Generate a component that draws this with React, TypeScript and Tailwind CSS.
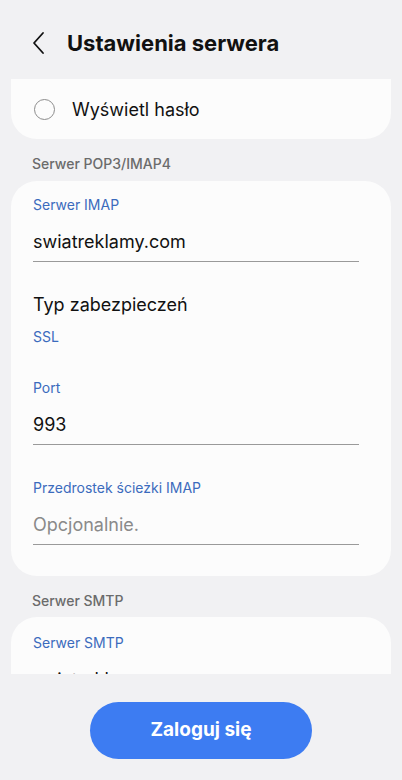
import React from "react";

const font = { fontFamily: "Inter, 'Noto Sans', sans-serif" };

function Field({
  label,
  value,
  placeholder = false,
  top,
}: {
  label: string;
  value: string;
  placeholder?: boolean;
  top: string;
}) {
  return (
    <div className={`${top} flex flex-col`}>
      <p className="h-5 text-[14px] leading-5 text-[#3b6bbd]">{label}</p>
      <p
        className={`mt-[13px] h-7 text-[18px] leading-7 ${
          placeholder ? "text-[#8a8a8a]" : "text-[#111]"
        }`}
      >
        {value}
      </p>
      <div className="mt-[5px] h-px bg-[#9a9a9a]" />
    </div>
  );
}

export default function App() {
  return (
    <div className="flex h-[780px] w-[402px] flex-col bg-[#f1f1f3]" style={font}>
      <header className="flex h-[79px] items-center pl-[31px] pt-[7px]">
        <svg width="16" height="24" viewBox="0 0 16 24" className="mr-[20px]">
          <polyline
            points="12,2 3,12 12,22"
            fill="none"
            stroke="#111"
            strokeWidth="1.8"
            strokeLinecap="round"
            strokeLinejoin="round"
          />
        </svg>
        <h1 className="text-[22px] font-bold text-[#111]">Ustawienia serwera</h1>
      </header>

      <div className="h-[595px] overflow-hidden">
        <div className="mx-[11px] flex h-[60px] items-center rounded-b-[26px] bg-[#fcfcfc] pl-[23px]">
          <span className="h-[21px] w-[21px] rounded-full border-[1.5px] border-[#8c8c8c]" />
          <span className="ml-[17px] text-[18px] text-[#111]">Wyświetl hasło</span>
        </div>

        <p className="ml-[32px] mt-[15px] mb-[7px] h-5 text-[14px] font-medium leading-5 text-[#6b6b6b]">
          Serwer POP3/IMAP4
        </p>

        <div className="mx-[11px] rounded-[26px] bg-[#fcfcfc] pl-[22px] pr-[32px] pt-[14px] pb-[31px]">
          <Field top="" label="Serwer IMAP" value="swiatreklamy.com" />
          <p className="mt-[29px] h-7 text-[18px] leading-7 text-[#111]">Typ zabezpieczeń</p>
          <p className="mt-[8px] h-5 text-[14px] leading-5 text-[#3b6bbd]">SSL</p>
          <Field top="mt-[31px]" label="Port" value="993" />
          <Field
            top="mt-[33px]"
            label="Przedrostek ścieżki IMAP"
            value="Opcjonalnie."
            placeholder
          />
        </div>

        <p className="ml-[32px] mt-[15px] mb-[6px] h-5 text-[14px] font-medium leading-5 text-[#6b6b6b]">
          Serwer SMTP
        </p>

        <div className="mx-[11px] rounded-t-[26px] bg-[#fcfcfc] pl-[22px] pr-[32px] pt-[16px] pb-[31px]">
          <Field top="" label="Serwer SMTP" value="swiatreklamy.com" />
        </div>
      </div>

      <div className="flex flex-1 items-start justify-center pt-[28px]">
        <button className="h-[57px] w-[222px] rounded-full bg-[#3d7cf2] text-[19px] font-bold text-white">
          Zaloguj się
        </button>
      </div>
    </div>
  );
}
